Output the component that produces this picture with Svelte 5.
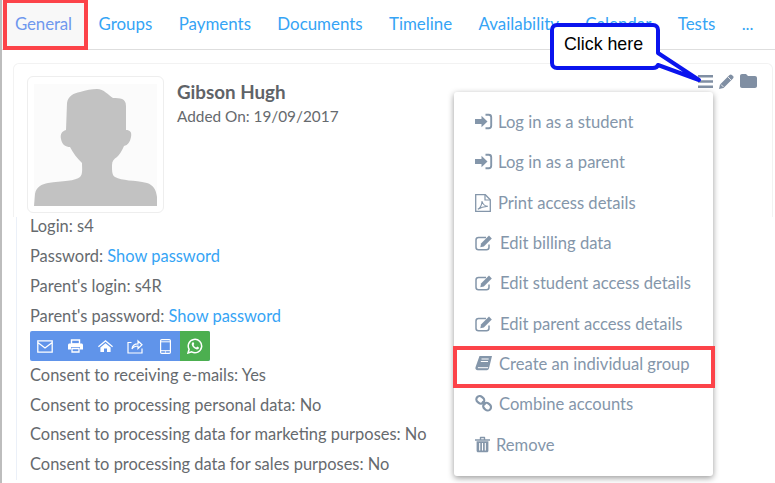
<script lang="ts">
  const TABS = ["General", "Groups", "Payments", "Documents", "Timeline", "Availability", "Calendar", "Tests", "..."];

  const ICONS: Record<string, string> = {
    login:
      '<path d="M0 6h6.500V2.800l6 5.700-6 5.700V11H0z" fill="currentColor"/><path d="M10.500 1.800h3.200c1.500 0 2.500 1 2.500 2.500v8.400c0 1.500-1 2.500-2.500 2.500h-3.200" fill="none" stroke="currentColor" stroke-width="1.900"/>',
    pdf:
      '<path d="M.7.700h9.600l5 5v11.600H.7z" fill="none" stroke="currentColor" stroke-width="1.300"/><path d="M10 1v5h5" fill="none" stroke="currentColor" stroke-width="1.200"/><path d="M2.800 15.300c2.300-1.200 4-4.800 4.300-8.300.5 3 2.500 5 5.800 5.300-3.300.2-7 1-10.100 3z" fill="none" stroke="currentColor" stroke-width="1.100"/>',
    edit:
      '<path d="M14 10.500v2.800c0 1.500-1.100 2.500-2.500 2.500H3.500C2 15.800 1 14.800 1 13.300V6c0-1.500 1-2.500 2.500-2.500H11" fill="none" stroke="currentColor" stroke-width="1.500"/><path d="M6 9.600 14 1.600l2.800 2.800-8 8-3.500.8z" fill="currentColor"/>',
    book:
      '<path d="M4.500 1H17l-3 12.300c-.2 1-.9 1.900-2.200 1.900H2.700C1 15.200 0 14 .5 12.300z" fill="currentColor"/><path d="M2.900 12.700h10.200M6.500 4h7.200M5.800 6.500h7.200" stroke="#fff" stroke-width="1" fill="none"/>',
    link:
      '<g fill="none" stroke="currentColor" stroke-width="2.200"><rect x="1.200" y="1.600" width="8.200" height="6.600" rx="3.300" transform="rotate(40 5.300 4.900)"/><rect x="8" y="8.400" width="8.200" height="6.600" rx="3.300" transform="rotate(40 12.100 11.700)"/><path d="M7 6.700l3.500 3"/></g>',
    trash:
      '<path d="M0 3.200h15v1.500H0zM4.800 3.200V1.700c0-.6.400-1 1-1h3.400c.6 0 1 .4 1 1v1.500H8.800v-1H6.200v1z" fill="currentColor"/><path d="M1.600 5.300h11.800v9.500c0 .9-.6 1.500-1.500 1.500H3.100c-.9 0-1.500-.6-1.500-1.500z" fill="currentColor"/><path d="M4.700 7v7.400M7.500 7v7.400M10.300 7v7.400" stroke="#fff" stroke-width="1.100" fill="none"/>',
  };

  // space: width of the icon column, labels do not line up in the original
  const MENU = [
    { icon: "login", label: "Log in as a student", space: 23 },
    { icon: "login", label: "Log in as a parent", space: 23 },
    { icon: "pdf", label: "Print access details", space: 23 },
    { icon: "edit", label: "Edit billing data", space: 25 },
    { icon: "edit", label: "Edit student access details", space: 25 },
    { icon: "edit", label: "Edit parent access details", space: 25 },
    { icon: "book", label: "Create an individual group", space: 24 },
    { icon: "link", label: "Combine accounts", space: 24 },
    { icon: "trash", label: "Remove", space: 21 },
  ];

  const CONSENTS = [
    "Consent to receiving e-mails: Yes",
    "Consent to processing personal data: No",
    "Consent to processing data for marketing purposes: No",
    "Consent to processing data for sales purposes: No",
  ];
</script>

<div class="page">
  <nav class="tabs">
    {#each TABS as tab, i}
      <span class="tab" class:active={i === 0}>{tab}</span>
    {/each}
  </nav>

  <section class="card">
    <div class="head">
      <div class="avatar">
        <svg viewBox="0 0 123 122" width="123" height="122">
          <rect width="123" height="122" fill="#fbfbfb" />
          <path
            d="M0 122 1 110C2 103 8 100 14 99 28 97 42 97 46 93 49 90 48 85 48 79 43 74 39 69 36 63 32 63 28 61 27 55 26 50 28 47 32 46L33 19C34 12 40 9 46 8 52 6 58 5 63 5 70 5 74 11 79 14 86 14 92 14 92 22L92 46C96 46 98 48 97 53 96 58 94 61 90 62 88 67 85 71 83 73 80 75 78 77 78 81 78 87 78 91 81 93 88 97 100 96 113 99 119 101 122 105 123 113V122Z"
            fill="#c2c2c2"
          />
        </svg>
      </div>
      <div class="who">
        <div class="name">Gibson Hugh</div>
        <div class="added">Added On: 19/09/2017</div>
      </div>
      <div class="actions">
        <svg viewBox="0 0 15 13" width="15" height="13"><path d="M0 0h15v2.600H0zM0 5.200h15v2.600H0zM0 10.400h15V13H0z" fill="currentColor" /></svg>
        <svg viewBox="0 0 15 15" width="15" height="15"><path d="M0 15l1-4.500L10.500 1c.8-.8 1.700-.8 2.400 0L14 2.100c.8.700.8 1.600 0 2.400L4.500 14z" fill="currentColor" /><path d="M9 3l3 3M2 10.500l2.500 2.500" stroke="#fff" stroke-width=".8" fill="none" /></svg>
        <svg viewBox="0 0 17 14" width="17" height="14"><path d="M0 2C0 .9.900 0 2 0h4l2 2h7c1.100 0 2 .9 2 2v8c0 1.100-.9 2-2 2H2c-1.100 0-2-.9-2-2z" fill="currentColor" /></svg>
      </div>
    </div>

    <div class="details">
      <div class="row first">Login: s4</div>
      <div class="row">Password: <span class="link">Show password</span></div>
      <div class="row">Parent's login: s4R</div>
      <div class="row">Parent's password: <span class="link">Show password</span></div>
      <div class="buttons">
        <span class="btn">
          <svg viewBox="0 0 16 13" width="16" height="13"><path d="M.8.800h14.400v11.400H.8z M.8 2.500 8 8l7.200-5.500" fill="none" stroke="currentColor" stroke-width="1.300" /></svg>
        </span>
        <span class="btn">
          <svg viewBox="0 0 15 14" width="15" height="14"><path d="M3.500 5V1h8v4z" fill="none" stroke="currentColor" stroke-width="1.400" /><path d="M1.500 4.500h12c.8 0 1.500.7 1.500 1.500v4.500h-3V8H3v2.500H0V6c0-.8.700-1.500 1.500-1.500z" fill="currentColor" /><path d="M4 9.500h7V13H4z" fill="none" stroke="currentColor" stroke-width="1.300" /></svg>
        </span>
        <span class="btn">
          <svg viewBox="0 0 15 12" width="15" height="12"><path d="M7.500 0 15 6.200l-.8 1L7.500 1.800.8 7.200 0 6.200zM2.400 7.400l5.100-4.200 5.100 4.200V12H9V8.500H6V12H2.400z" fill="currentColor" /></svg>
        </span>
        <span class="btn">
          <svg viewBox="0 0 16 16" width="16" height="16"><path d="M4.500 4.500H1v10.500h14v-4.500" fill="none" stroke="currentColor" stroke-width="1.200" /><path d="M5 11c.3-3.500 3-5.200 6-5.200V3l4 3.800-4 3.800V8c-2.500 0-4.600.8-6 3z" fill="none" stroke="currentColor" stroke-width="1.200" /></svg>
        </span>
        <span class="btn">
          <svg viewBox="0 0 11 15" width="11" height="15"><rect x=".6" y=".6" width="9.800" height="13.800" rx="1.200" fill="none" stroke="currentColor" stroke-width="1.200" /><path d="M1 2.800h9M1 11.700h9" stroke="currentColor" stroke-width="1" /><circle cx="5.500" cy="13" r=".7" fill="currentColor" /></svg>
        </span>
        <span class="btn green">
          <svg viewBox="0 0 16 16" width="16" height="16"><path d="M1 15l1.100-3.700A6.700 6.700 0 1 1 4.700 13.900z" fill="none" stroke="currentColor" stroke-width="1.500" /><path d="M5.700 4.300c-.6.400-1 1-1 1.800 0 2.300 3 5.300 5.400 5.300.8 0 1.500-.5 1.800-1.100.1-.4.100-.7 0-.8l-1.700-.9-.9 1c-1.200-.4-2.300-1.500-2.800-2.700l.8-.8-.8-1.800z" fill="currentColor" /></svg>
        </span>
      </div>
      {#each CONSENTS as line}
        <div class="row consent">{line}</div>
      {/each}
    </div>
  </section>

  <ul class="menu">
    {#each MENU as item}
      <li>
        <span class="menu-icon" style="width: {item.space}px">
          <svg viewBox="0 0 18 18" width="18" height="18">{@html ICONS[item.icon]}</svg>
        </span>
        <span>{item.label}</span>
      </li>
    {/each}
  </ul>

  <div class="mark mark-tab"></div>
  <div class="mark mark-item"></div>

  <div class="callout">
    <svg viewBox="0 0 156 62" width="156" height="62">
      <path
        d="M7 2h96c3 0 5 2 5 5v23l41 27-41-15c-.5 1.500-2.500 3-5 3H7c-3 0-5-2-5-5V7c0-3 2-5 5-5z"
        fill="#fff"
        stroke="#0a14ee"
        stroke-width="4"
        stroke-linejoin="round"
      />
    </svg>
    <span class="callout-text">Click here</span>
  </div>
</div>

<style>
  :global(body) {
    margin: 0;
    background: #fff;
  }

  .page {
    position: relative;
    width: 775px;
    height: 483px;
    overflow: hidden;
    box-sizing: border-box;
    border-left: 2px solid #bdbdbd;
    font-family: Lato, sans-serif;
    font-size: 16.45px;
    color: #666a6e;
  }

  .tabs {
    display: flex;
    height: 49px;
    padding-left: 1px;
    border-bottom: 1px solid #dedede;
    background: #fff;
    font-size: 16.9px;
  }

  .tab {
    padding: 13px 13.2px 0;
    color: #35a4f5;
  }

  .tab.active {
    margin-left: -2px;
    padding-left: 14px;
    padding-right: 13.5px;
    color: #6f98ee;
    background: #f8f8f8;
    letter-spacing: -0.15px;
  }

  .card {
    margin: 13px 2px 0 11px;
  }

  .head {
    display: flex;
    height: 154px;
    padding: 12px 14px 0 13px;
    box-sizing: border-box;
    border: 1px solid #f2f2f2;
    border-bottom: 0;
    border-radius: 6px 6px 0 0;
  }

  .avatar {
    width: 137px;
    height: 137px;
    box-sizing: border-box;
    padding: 7px 6px;
    border: 1px solid #eee;
    border-radius: 6px;
    background: #fff;
  }

  .avatar svg {
    display: block;
  }

  .who {
    margin-left: 13px;
    padding-top: 3px;
    line-height: 25px;
  }

  .name {
    font-size: 18.8px;
    font-weight: 700;
    color: #5f6368;
  }

  .added {
    font-size: 15.35px;
  }

  .actions {
    display: flex;
    align-items: center;
    gap: 6px;
    height: 14px;
    margin: -2px 1px 0 auto;
    color: #808fa3;
  }

  .details {
    margin-left: 3px;
    padding-left: 13px;
    border-left: 1px solid #ebf0f8;
  }

  .row {
    height: 30px;
    line-height: 30px;
  }

  .row.first {
    height: 24px;
    line-height: 18px;
  }

  .row.consent {
    height: 29.7px;
    line-height: 28px;
  }

  .link {
    color: #35a4f5;
  }

  .buttons {
    display: flex;
    width: 180px;
    height: 30px;
    border-radius: 2px;
    overflow: hidden;
    background: #6094ea;
  }

  .btn {
    display: flex;
    flex: 1;
    align-items: center;
    justify-content: center;
    color: #fff;
  }

  .btn.green {
    background: #4caf50;
  }

  .menu {
    position: absolute;
    top: 92px;
    left: 452px;
    width: 259px;
    height: 384px;
    box-sizing: border-box;
    margin: 0;
    padding: 10px 0 0 21px;
    list-style: none;
    background: #fff;
    border-radius: 3px;
    box-shadow: 0 2px 6px rgba(0, 0, 0, 0.4);
    color: #8496aa;
    font-size: 16.6px;
  }

  .menu li {
    display: flex;
    align-items: center;
    height: 40.3px;
  }

  .menu-icon {
    display: flex;
    flex: none;
  }

  .mark {
    position: absolute;
    box-sizing: border-box;
    border: 4px solid #fc4349;
  }

  .mark-tab {
    top: 0;
    left: 1px;
    width: 85px;
    height: 50px;
    border-top-width: 3px;
  }

  .mark-item {
    top: 346px;
    left: 451px;
    width: 262px;
    height: 42px;
  }

  .callout {
    position: absolute;
    top: 23px;
    left: 548px;
    width: 156px;
    height: 62px;
  }

  .callout svg {
    display: block;
  }

  .callout-text {
    position: absolute;
    top: 11px;
    left: 14px;
    font-family: "Liberation Sans", sans-serif;
    font-size: 17.8px;
    line-height: 20px;
    color: #000;
  }
</style>
